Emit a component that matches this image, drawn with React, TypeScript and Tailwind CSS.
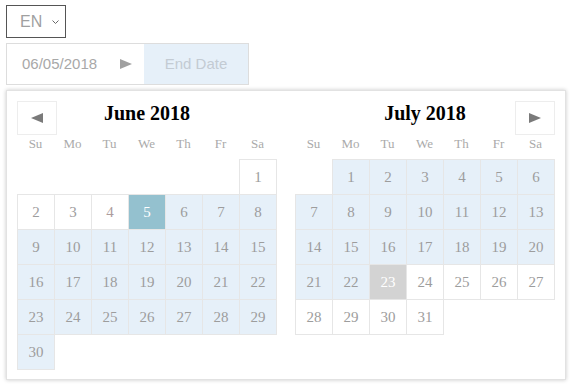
import React from 'react';

type Day = { n: number; tone: 'plain' | 'range' | 'start' | 'today' | 'muted' };

const weekdays = ['Su', 'Mo', 'Tu', 'We', 'Th', 'Fr', 'Sa'];

const june: Day[] = Array.from({ length: 30 }, (_, i) => {
  const n = i + 1;
  if (n === 5) return { n, tone: 'start' };
  if (n === 4) return { n, tone: 'muted' };
  if (n < 5) return { n, tone: 'plain' };
  return { n, tone: 'range' };
});

const july: Day[] = Array.from({ length: 31 }, (_, i) => {
  const n = i + 1;
  if (n === 23) return { n, tone: 'today' };
  if (n < 23) return { n, tone: 'range' };
  return { n, tone: 'plain' };
});

const toneClass: Record<Day['tone'], string> = {
  plain: 'bg-white text-[#9d9d9d]',
  muted: 'bg-white text-[#ad9c9c]',
  range: 'bg-[#e6f0f9] text-[#9d9d9d]',
  start: 'bg-[#94c1cf] text-white',
  today: 'bg-[#d3d3d3] text-white',
};

const Triangle: React.FC<{ dir: 'left' | 'right'; color: string }> = ({ dir, color }) => (
  <svg width="12" height="10" viewBox="0 0 12 10">
    {dir === 'left' ? (
      <polygon points="12,0 12,10 0,5" fill={color} />
    ) : (
      <polygon points="0,0 0,10 12,5" fill={color} />
    )}
  </svg>
);

const Month: React.FC<{ title: string; offset: number; days: Day[]; nav: 'prev' | 'next' }> = ({
  title,
  offset,
  days,
  nav,
}) => {
  const navButton = (
    <div className="w-[40px] h-[34px] border border-[#ededed] flex items-center justify-center">
      <Triangle dir={nav === 'prev' ? 'left' : 'right'} color="#7a7a7a" />
    </div>
  );

  return (
    <div className="w-[260px]">
      {/* header */}
      <div className="grid grid-cols-[40px_1fr_40px] h-[34px]">
        {nav === 'prev' ? navButton : <div />}
        <div className="text-center font-bold text-[20px] leading-[20px] mt-[2px] text-black">{title}</div>
        {nav === 'next' ? navButton : <div />}
      </div>

      {/* weekday labels */}
      <div className="grid grid-cols-[repeat(7,37px)] h-[16px] mt-px">
        {weekdays.map((w) => (
          <div key={w} className="text-center text-[13px] leading-[16px] text-[#aaaaaa]">
            {w}
          </div>
        ))}
      </div>

      {/* days */}
      <div className="grid grid-cols-[repeat(7,37px)] auto-rows-[35px] mt-[7px]">
        {Array.from({ length: offset }, (_, i) => (
          <div key={`e${i}`} />
        ))}
        {days.map((d) => (
          <div
            key={d.n}
            className={`w-[38px] h-[36px] border border-[#e6e6e6] flex items-center justify-center text-[15px] ${toneClass[d.tone]}`}
          >
            {d.n}
          </div>
        ))}
      </div>
    </div>
  );
};

const App: React.FC = () => {
  return (
    <div className="min-h-screen bg-white pl-[6px] pt-[5px] font-['Liberation_Sans',Arial,sans-serif]">
      {/* Language select */}
      <div className="w-[60px] h-[33px] border border-[#555] flex items-center">
        <span className="pl-[13px] text-[16px] text-[#a0a0a0]">EN</span>
        <svg className="ml-[10px]" width="7" height="4" viewBox="0 0 7 4">
          <polyline points="0.5,0.5 3.5,3.5 6.5,0.5" fill="none" stroke="#666" strokeWidth="1" />
        </svg>
      </div>

      {/* Date range input */}
      <div className="mt-[5px] w-[243px] h-[42px] border border-[#dddddd] flex">
        <div className="w-[137px] flex items-center pl-[15px] text-[15px] text-[#a8a8a8]">
          <span>06/05/2018</span>
          <span className="ml-[23px] flex">
            <Triangle dir="right" color="#a0a0a0" />
          </span>
        </div>
        <div className="flex-1 bg-[#e6f0f9] flex items-center justify-center text-[15px] text-[#c3cbd3]">
          End Date
        </div>
      </div>

      {/* Calendar popup */}
      <div className="mt-[5px] w-[560px] h-[290px] border border-[#e2e2e2] shadow-[0_0_4px_rgba(0,0,0,0.22)] bg-white pt-[10px] px-[10px] flex justify-between font-['Liberation_Serif','Times_New_Roman',serif]">
        <Month title="June 2018" offset={6} days={june} nav="prev" />
        <Month title="July 2018" offset={1} days={july} nav="next" />
      </div>
    </div>
  );
};

export default App;
